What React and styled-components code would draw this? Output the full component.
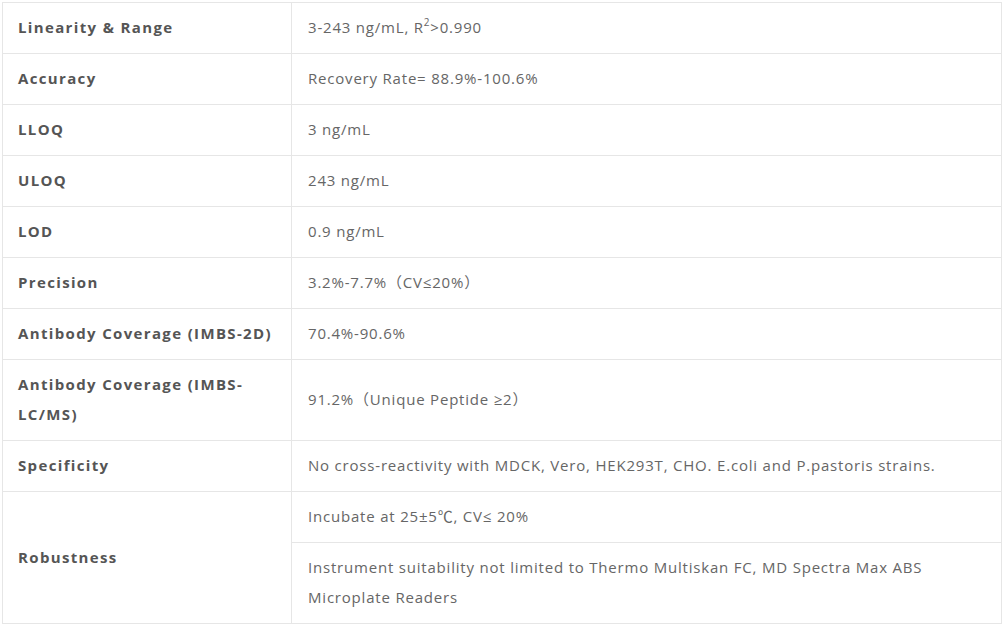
import React from "react";
import styled, { createGlobalStyle } from "styled-components";

const Global = createGlobalStyle`
  html, body { margin: 0; padding: 0; background: #fff; }
  body { padding: 2px 0 0 2px; font-family: "Open Sans", "Noto Sans CJK SC", sans-serif; }
`;

const Table = styled.table`
  width: 1000px;
  border-collapse: collapse;
  table-layout: fixed;
  font-size: 15px;
  line-height: 30px;
`;

const Label = styled.td`
  width: 258px;
  border: 1px solid #e6e6e6;
  padding: 9px 15px 11px;
  font-weight: 700;
  letter-spacing: 1.35px;
  color: #555;
  vertical-align: middle;
`;

const Value = styled.td`
  border: 1px solid #e6e6e6;
  padding: 9px 16px 11px;
  color: #666;
  letter-spacing: 0.8px;
  vertical-align: middle;
`;

const Sup = styled.sup`
  font-size: 10px;
  line-height: 0;
  position: relative;
  top: -1px;
`;

const rows = [
  ["Linearity & Range", <>3-243 ng/mL, R<Sup>2</Sup>&gt;0.990</>],
  ["Accuracy", "Recovery Rate= 88.9%-100.6%"],
  ["LLOQ", "3 ng/mL"],
  ["ULOQ", "243 ng/mL"],
  ["LOD", "0.9 ng/mL"],
  ["Precision", "3.2%-7.7%（CV≤20%）"],
  ["Antibody Coverage (IMBS-2D)", "70.4%-90.6%"],
  ["Antibody Coverage (IMBS-LC/MS)", "91.2%（Unique Peptide ≥2）"],
  ["Specificity", "No cross-reactivity with MDCK, Vero, HEK293T, CHO. E.coli and P.pastoris strains."],
];

export default function App() {
  return (
    <>
      <Global />
      <Table>
        <tbody>
          {rows.map(([k, v]) => (
            <tr key={k}>
              <Label>{k}</Label>
              <Value>{v}</Value>
            </tr>
          ))}
          <tr>
            <Label rowSpan={2}>Robustness</Label>
            <Value>Incubate at 25±5℃, CV≤ 20%</Value>
          </tr>
          <tr>
            <Value>
              Instrument suitability not limited to Thermo Multiskan FC, MD Spectra Max ABS Microplate Readers
            </Value>
          </tr>
        </tbody>
      </Table>
    </>
  );
}
